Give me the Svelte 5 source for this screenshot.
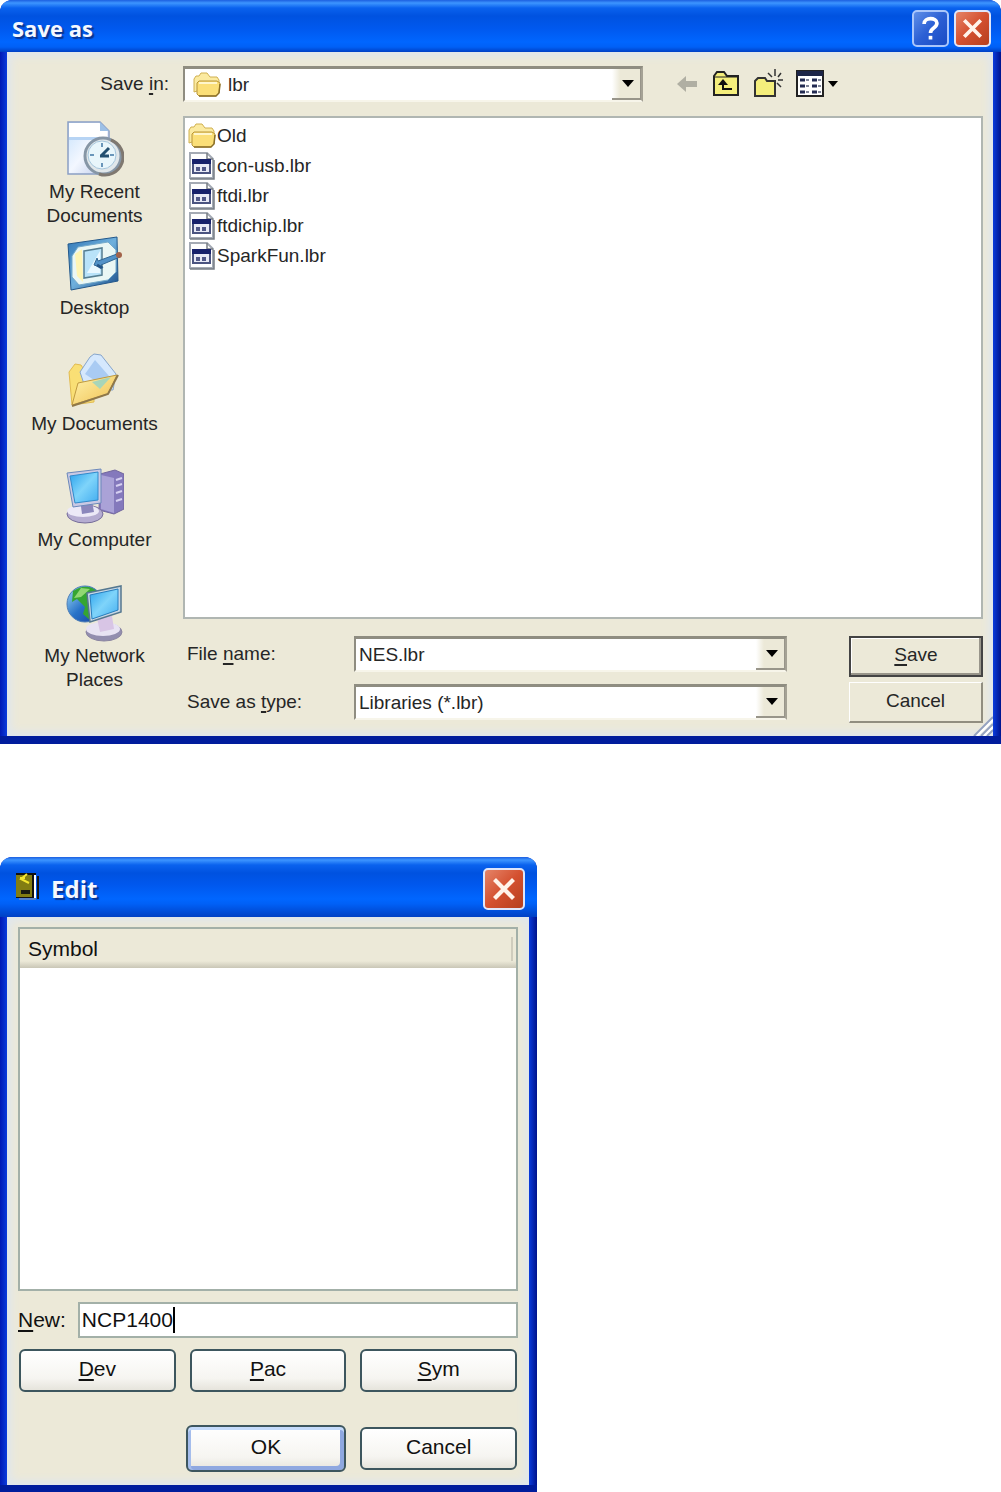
<script lang="ts">
	type Place = { name: string; lines: string[] };

	const places: Place[] = [
		{ name: 'recent', lines: ['My Recent', 'Documents'] },
		{ name: 'desktop', lines: ['Desktop'] },
		{ name: 'documents', lines: ['My Documents'] },
		{ name: 'computer', lines: ['My Computer'] },
		{ name: 'network', lines: ['My Network', 'Places'] }
	];

	const files = ['con-usb.lbr', 'ftdi.lbr', 'ftdichip.lbr', 'SparkFun.lbr'];

	let fileName = $state('NES.lbr');
	let symbolName = $state('NCP1400');
</script>

{#snippet folder()}
	<svg class="folder" width="30" height="26" viewBox="0 0 30 26" aria-hidden="true">
		<path d="M2 20V7l2-3h3l2-3h6l3 4h7l2 3v4z" fill="#fbeaa0" stroke="#d0b050" />
		<path d="M5 22V11l2-2h18l3 2-1 10-3 3H7z" fill="#fbdf78" stroke="#b8963a" />
		<path d="M7 11h18" stroke="#fff6cc" stroke-width="2" />
		<path d="M7 24h17l3-3 1-9" fill="none" stroke="#8a6f28" stroke-width="1.5" />
	</svg>
{/snippet}

{#snippet closeIcon()}
	<svg viewBox="0 0 36 36" aria-hidden="true">
		<path d="m9 9 18 18M27 9 9 27" stroke="#fff3ea" stroke-width="4" />
	</svg>
{/snippet}

{#snippet arrow()}
	<svg width="12" height="7" viewBox="0 0 12 7" aria-hidden="true"><path d="M0 0h12L6 7z" /></svg>
{/snippet}

{#snippet placeIcon(name: string)}
	<svg width="58" height="58" viewBox="0 0 58 58" aria-hidden="true">
		{#if name === 'recent'}
			<path d="M2 2h32l9 9v43H2z" fill="url(#paper)" stroke="#8b9fc4" stroke-width="1.5" />
			<path d="M3 3h30l8 8v6H3z" fill="#fff" />
			<path d="M34 2v9h9z" fill="#9dc0e6" />
			<path d="M3 17h38v3H3z" fill="#b7d4f4" />
			<circle cx="37" cy="36" r="18" fill="#e1e7ea" stroke="#8696a6" stroke-width="3" />
			<path d="M45 20a18 18 0 0 1-12 34" fill="none" stroke="#7f7870" stroke-width="3" />
			<circle cx="36" cy="35" r="14" fill="#e9f6fb" stroke="#a7c6dc" />
			<path d="M36 23v4M36 43v4M24 35h4M44 35h4" stroke="#6a96ba" stroke-width="2" />
			<path d="m35 36 8-8M34 36h9" stroke="#234f70" stroke-width="3" />
		{:else if name === 'desktop'}
			<path d="M2 8 51 1l1 44L5 54z" fill="url(#pad)" stroke="#23588b" />
			<path d="m12 11 30-5 8 8v22l-8 8-29 5-7-8V20z" fill="#eaf7f5" stroke="#75aaca" />
			<path d="m9 18 7-5 1 33-6-6z" fill="#fff5b4" />
			<path d="M18 15 36 12v27l-18 3z" fill="#b9e3f9" stroke="#557e91" stroke-width="1.5" />
			<path d="m21 37 13-22v22z" fill="#e9f8ff" />
			<path d="m28 29 3-7 1 3 19-7 3 3-19 8 2 3z" fill="#5292c8" stroke="#326894" />
			<circle cx="53" cy="19" r="3" fill="#a26249" />
			<path d="m31 29 5 3" stroke="#245587" stroke-width="3" />
		{:else if name === 'documents'}
			<path d="m3 20 6-8 6 1 5 8 7-1 1 30-22 3z" fill="#f9df75" stroke="#e2bb50" />
			<path d="m14 20 10-15 4-3 7 1 15 19-3 16H20z" fill="#d5e8fd" stroke="#86a5cb" />
			<path d="m19 22 10-14 14 16-9 8z" fill="#a9cbf3" />
			<path d="m12 31 39-8-9 19L6 53z" fill="url(#gold)" stroke="#c09a40" />
			<path d="m26 30 19-5-11 12z" fill="#a7d5b9" />
			<path d="m52 23-10 19L6 54" fill="none" stroke="#8f784a" stroke-width="2" />
		{:else if name === 'computer'}
			<path d="m34 6 15-4 9 4v35l-10 5-15-4z" fill="#8479bc" stroke="#72679d" />
			<path d="m35 7 13 3v35l-13-4z" fill="#aaa2d7" />
			<path d="m50 12 6-2M50 18l6-2M50 25l6-2M50 33l6-2" stroke="#d6d0f1" stroke-width="2" />
			<ellipse cx="19" cy="46" rx="18" ry="9" fill="#b5acd1" stroke="#746b99" />
			<ellipse cx="17" cy="43" rx="16" ry="6" fill="#ece9f7" />
			<path d="m14 31 12 2 2 11-12 2z" fill="#8b87bc" />
			<path d="m1 5 34-4v34l-28 4z" fill="#cac9e4" stroke="#6a88bb" />
			<path d="m4 8 28-4v28L9 35z" fill="url(#screen)" stroke="#328aca" />
		{:else}
			<circle cx="19" cy="20" r="18" fill="url(#globe)" stroke="#4f7fb7" />
			<path d="M7 7q14-9 25 1l3 13-10 16-8-7 2-7-8-8-5 3z" fill="#35a532" />
			<path d="m15 4 9 1-9 8-7 1z" fill="#91d873" />
			<ellipse cx="38" cy="48" rx="18" ry="9" fill="#938eaf" stroke="#8a84a0" />
			<ellipse cx="37" cy="45" rx="17" ry="7" fill="#e8e3f3" />
			<path d="m31 34 15-2 2 13-14 3z" fill="#d8c5e5" />
			<path d="m21 9 34-7v26l-31 10z" fill="#c8d7e4" stroke="#54778f" stroke-width="1.5" />
			<path d="m24 11 28-6v21l-26 9z" fill="url(#screen)" stroke="#277dbd" />
		{/if}
	</svg>
{/snippet}

<svg class="defs" width="0" height="0" aria-hidden="true">
	<defs>
		<linearGradient id="paper" x2="1" y2="1">
			<stop stop-color="#c6e1fc" /><stop offset=".5" stop-color="#f3f7ff" /><stop offset="1" stop-color="#b7c5e8" />
		</linearGradient>
		<linearGradient id="pad" x2="1" y2="1">
			<stop stop-color="#3278b7" /><stop offset=".5" stop-color="#6fb0dd" /><stop offset="1" stop-color="#174b88" />
		</linearGradient>
		<linearGradient id="gold" x2="1" y2="1">
			<stop stop-color="#fff3ad" /><stop offset="1" stop-color="#f0c050" />
		</linearGradient>
		<linearGradient id="screen" x2="1" y2="1">
			<stop stop-color="#2aa2ed" /><stop offset=".5" stop-color="#7fd4fa" /><stop offset="1" stop-color="#43adf0" />
		</linearGradient>
		<linearGradient id="globe" x2="1" y2="1">
			<stop stop-color="#a5dcf8" /><stop offset=".5" stop-color="#2873c8" /><stop offset="1" stop-color="#173d9b" />
		</linearGradient>
	</defs>
</svg>

<main>
	<section class="window" aria-labelledby="save-title">
		<header class="titlebar">
			<h1 id="save-title">Save as</h1>
			<button class="caption help" aria-label="Help">
				<svg viewBox="0 0 36 36" aria-hidden="true">
					<path d="M11 13c0-8 14-7 14-1 0 6-7 5-7 11" fill="none" stroke="#fff" stroke-width="4" />
					<path d="M16 26h4v4h-4z" fill="#fff" />
				</svg>
			</button>
			<button class="caption close" aria-label="Close">{@render closeIcon()}</button>
		</header>

		<div class="save-body">
			<label class="save-in" for="save-in">Save <u>i</u>n:</label>
			<div class="location">
				<div class="combo">
					{@render folder()}
					<select id="save-in"><option>lbr</option></select>
					<span class="drop">{@render arrow()}</span>
				</div>
				<div class="tools">
					<button aria-label="Back" disabled>
						<svg width="24" height="28" viewBox="0 0 24 28"><path d="m2 14 9-8v5h11v6H11v5z" fill="#b0afa3" /></svg>
					</button>
					<button aria-label="Up one level">
						<svg width="28" height="28" viewBox="0 0 28 28">
							<path d="M2 25V6l3-4h7l3 4h11v19z" fill="#f4ee7c" stroke="#222" stroke-width="2" />
							<path d="M3 7h22" stroke="#222" />
							<path d="M11 12v7h9" fill="none" stroke="#111" stroke-width="2" />
							<path d="m6 15 5-6 5 6z" fill="#111" />
						</svg>
					</button>
					<button aria-label="Create new folder">
						<svg width="30" height="30" viewBox="0 0 30 30">
							<path d="M2 27V12l3-3h7l2 3h8v15z" fill="#f4ee7c" stroke="#333" stroke-width="2" />
							<path d="M22 0v7M22 15v6M15 4l4 4M28 4l-3 4M25 11h5M24 14l4 4M15 12h5" stroke="#333" stroke-width="1.5" />
						</svg>
					</button>
					<button class="views" aria-label="Views">
						<svg width="28" height="28" viewBox="0 0 28 28">
							<path d="M1 1h26v25H1z" fill="#fff" stroke="#222" stroke-width="2" />
							<path d="M1 1h26v5H1z" fill="#1c2547" />
							<path d="M4 10h5M4 16h5M4 22h5M16 10h5M16 16h5M16 22h5" stroke="#222a51" stroke-width="3" />
							<path d="M10 10h3M10 16h3M10 22h3M22 10h3M22 16h3M22 22h3" stroke="#555d78" stroke-width="1.5" />
						</svg>
						<svg width="10" height="6" viewBox="0 0 12 7"><path d="M0 0h12L6 7z" /></svg>
					</button>
				</div>
			</div>

			<nav class="places" aria-label="Places">
				{#each places as place}
					<button class="place">
						{@render placeIcon(place.name)}
						{#each place.lines as line}
							<span>{line}</span>
						{/each}
					</button>
				{/each}
			</nav>

			<div class="content">
				<ul class="files">
					<li>{@render folder()}Old</li>
					{#each files as file}
						<li>
							<svg width="30" height="30" viewBox="0 0 30 30" aria-hidden="true">
								<path d="M3 2h17l6 6v19H3z" fill="#fff" stroke="#a4aab4" stroke-width="2" />
								<path d="M20 2v6h6M27 9v19H3" fill="none" stroke="#777d84" stroke-width="1.5" />
								<path d="M6 9h17v13H6z" fill="#e8eaf6" stroke="#4b5480" stroke-width="2" />
								<path d="M5 8h19v5H5z" fill="#17216b" />
								<path d="M9 16h4v4H9zM15 16h4v4h-4z" fill="#525989" />
							</svg>
							{file}
						</li>
					{/each}
				</ul>

				<div class="footer">
					<div class="fields">
						<label for="file-name">File <u>n</u>ame:</label>
						<div class="combo">
							<input id="file-name" bind:value={fileName} />
							<button class="drop" aria-label="Show file names">{@render arrow()}</button>
						</div>
						<label for="file-type">Save as <u>t</u>ype:</label>
						<div class="combo">
							<select id="file-type"><option>Libraries (*.lbr)</option></select>
							<span class="drop">{@render arrow()}</span>
						</div>
					</div>
					<div class="actions">
						<button class="classic default"><u>S</u>ave</button>
						<button class="classic">Cancel</button>
					</div>
				</div>
			</div>
		</div>
		<svg class="grip" width="20" height="20" viewBox="0 0 20 20" aria-hidden="true">
			<path d="M1 20 20 1M8 20 20 8M14 20l6-6" stroke="#94a2c0" stroke-width="2" />
			<path d="M4 20 20 4M11 20l9-9" stroke="#fff" stroke-width="2" />
		</svg>
	</section>

	<section class="window edit" aria-labelledby="edit-title">
		<header class="titlebar tall">
			<svg width="26" height="36" viewBox="0 0 26 36" aria-hidden="true">
				<path d="M1 2h20v25H1z" fill="#111" />
				<path d="M1 4h16v22H1z" fill="#827d12" />
				<path d="m12 3-6 5 8 4M5 7h5" fill="none" stroke="#f3e62e" stroke-width="2" />
				<path d="M6 19h9v4H6z" fill="#191b10" />
				<path d="M20 4v23" stroke="#fff" stroke-width="2" />
				<path d="M23 5v23" stroke="#161616" stroke-width="2" />
				<path d="M4 28h17" stroke="#5680c9" stroke-width="2" />
			</svg>
			<h2 id="edit-title">Edit</h2>
			<button class="caption close" aria-label="Close">{@render closeIcon()}</button>
		</header>

		<div class="edit-body">
			<div class="symbols">
				<table>
					<thead>
						<tr><th scope="col"><span>Symbol</span></th></tr>
					</thead>
					<tbody></tbody>
				</table>
			</div>
			<div class="new-row">
				<label for="new-symbol"><u>N</u>ew:</label>
				<div class="textbox">
					<input id="new-symbol" bind:value={symbolName} />
					<span class="caret"></span>
				</div>
			</div>
			<div class="buttons">
				<button class="luna"><u>D</u>ev</button>
				<button class="luna"><u>P</u>ac</button>
				<button class="luna"><u>S</u>ym</button>
			</div>
			<div class="buttons confirm">
				<button class="luna ok">OK</button>
				<button class="luna">Cancel</button>
			</div>
		</div>
	</section>
</main>

<style>
	:global(body) {
		margin: 0;
		background: #fff;
	}

	main {
		display: flex;
		flex-direction: column;
		gap: 113px;
		font: 19px/24px 'Liberation Sans', Arial, sans-serif;
		color: #262626;
	}

	.defs {
		position: absolute;
	}

	button,
	input,
	select {
		box-sizing: border-box;
		margin: 0;
		padding: 0;
		border: 0;
		border-radius: 0;
		background: none;
		font: inherit;
		color: inherit;
		outline: none;
	}

	select {
		appearance: none;
	}

	u {
		text-decoration-thickness: 2px;
		text-underline-offset: 3px;
	}

	.window {
		position: relative;
		box-sizing: border-box;
		padding: 0 8px 8px 7px;
		border-radius: 12px 12px 0 0;
		background: linear-gradient(90deg, #0019b4, #0a3bdc 7px, #0a3bdc calc(100% - 8px), #00138c);
		box-shadow: inset 0 -8px #001c9c;
	}

	.titlebar {
		display: flex;
		align-items: center;
		gap: 5px;
		height: 52px;
		margin: 0 -8px 0 -7px;
		padding: 4px 10px 0 12px;
		box-sizing: border-box;
		border-radius: 12px 12px 0 0;
		background: linear-gradient(#1c5fe0, #3d95ff 3px, #0a62ee 8px, #0052e0 16px, #0058ee 28px, #0066ff 42px, #0060f6 47px, #0040c4);
	}

	.titlebar.tall {
		height: 60px;
		gap: 10px;
		padding: 4px 12px 0 15px;
	}

	h1,
	h2 {
		flex: 1;
		margin: 0;
		font: bold 22px/32px 'Open Sans', sans-serif;
		color: #f4f8ff;
		text-shadow: 2px 2px 1px #0a3490;
	}

	h2 {
		font-size: 24px;
	}

	.caption {
		width: 37px;
		height: 37px;
		border: 2px solid #dfe6fa;
		border-radius: 5px;
	}

	.caption svg {
		display: block;
		width: 100%;
	}

	.help {
		border-color: #a9c6fb;
		background: linear-gradient(135deg, #5f8fe8, #2b5fd4 50%, #1a4cc4);
	}

	.close {
		background: linear-gradient(135deg, #e58468, #d4502f 50%, #b5401f);
	}

	.tall .caption {
		width: 42px;
		height: 42px;
	}

	.save-body {
		display: grid;
		grid-template-columns: 175px 1fr;
		grid-template-rows: 50px auto;
		padding: 14px 10px 13px 1px;
		background: #ece9d8;
		box-shadow: inset 0 0 8px 4px #dfe6ee;
	}

	.save-in {
		padding: 6px 14px 0 0;
		text-align: right;
	}

	.location {
		display: flex;
		align-items: start;
		gap: 32px;
	}

	.location .combo {
		flex: 0 1 460px;
	}

	.combo {
		display: flex;
		align-items: center;
		box-sizing: border-box;
		height: 36px;
		border: 2px solid #8f8d81;
		border-top-width: 3px;
		border-right-color: #a5a295;
		border-bottom-color: #f7f5ea;
		background: #fff;
	}

	.combo input,
	.combo select {
		flex: 1;
		min-width: 0;
		height: 100%;
		padding: 0 3px;
	}

	.combo .folder {
		margin: 0 3px 0 7px;
	}

	.combo .drop {
		display: flex;
		align-items: center;
		justify-content: center;
		box-sizing: border-box;
		width: 29px;
		height: 100%;
		padding-left: 3px;
		border: solid #98958a;
		border-width: 0 1px 2px 0;
		background: linear-gradient(90deg, #fff, #ece9d8 8px);
	}

	.tools {
		display: flex;
		align-items: center;
		gap: 13px;
		height: 35px;
	}

	.tools button {
		display: flex;
		align-items: center;
		gap: 4px;
	}

	.places {
		display: flex;
		flex-direction: column;
		padding: 4px 2px 0 0;
	}

	.place {
		display: flex;
		flex-direction: column;
		align-items: center;
		height: 116px;
	}

	.place svg {
		margin-bottom: 2px;
	}

	.files {
		box-sizing: border-box;
		height: 503px;
		margin: 0 0 17px;
		padding: 3px 2px;
		border: 2px solid #b0b6b2;
		background: #fff;
		list-style: none;
	}

	.files li {
		display: flex;
		align-items: center;
		height: 30px;
	}

	.footer {
		display: flex;
		justify-content: space-between;
		gap: 62px;
	}

	.fields {
		flex: 1;
		display: grid;
		grid-template-columns: 167px 1fr;
		grid-auto-rows: 36px;
		row-gap: 12px;
		align-items: center;
		padding-left: 4px;
	}

	.actions {
		display: flex;
		flex-direction: column;
		gap: 5px;
	}

	.classic {
		width: 134px;
		height: 41px;
		padding-bottom: 3px;
		border: solid #918e80;
		border-width: 1px 2px 2px 1px;
		border-top-color: #fff;
		border-left-color: #fff;
		background: #ece9d8;
	}

	.classic.default {
		border: 2px solid #444;
		box-shadow: inset -2px -2px #98958a, inset 1px 1px #fff;
	}

	.grip {
		position: absolute;
		right: 8px;
		bottom: 8px;
	}

	.edit {
		width: 100%;
		max-width: 537px;
		font-size: 21px;
		color: #111;
	}

	.edit-body {
		padding: 10px 11px 13px;
		background: #ece9d8;
		box-shadow: inset 0 0 8px 4px #dfe6ee;
	}

	.symbols {
		box-sizing: border-box;
		height: 364px;
		border: 2px solid #a3b0a8;
		background: #fff;
	}

	table {
		width: 100%;
		border-collapse: collapse;
	}

	th {
		height: 39px;
		box-sizing: border-box;
		padding: 6px 3px 6px 8px;
		background: linear-gradient(#ece9d8 32px, #c9c6b6);
		font-weight: normal;
		text-align: left;
	}

	th span {
		display: block;
		border-right: 2px solid #cfccbd;
	}

	.new-row {
		display: flex;
		align-items: center;
		gap: 12px;
		margin: 11px 0 11px;
	}

	.textbox {
		flex: 1;
		display: flex;
		align-items: center;
		box-sizing: border-box;
		height: 36px;
		padding-left: 2px;
		border: 2px solid #a3b0a8;
		background: #fff;
	}

	.textbox input {
		field-sizing: content;
		caret-color: transparent;
	}

	.caret {
		width: 2px;
		height: 26px;
		background: #000;
	}

	.buttons {
		display: grid;
		grid-template-columns: repeat(3, 1fr);
		align-items: center;
		gap: 14px;
		padding: 0 1px;
	}

	.confirm {
		margin-top: 33px;
	}

	.luna {
		height: 43px;
		padding-bottom: 3px;
		border: 2px solid #3d565e;
		border-radius: 6px;
		background: linear-gradient(#fff, #f6f5f1 70%, #e6e4dc);
	}

	.luna.ok {
		grid-column: 2;
		height: 47px;
		margin-left: -4px;
		box-shadow: inset 0 3px #c5dbfb, inset 3px 0 #a5bdec, inset -4px -4px #8fa8e0;
	}
</style>
